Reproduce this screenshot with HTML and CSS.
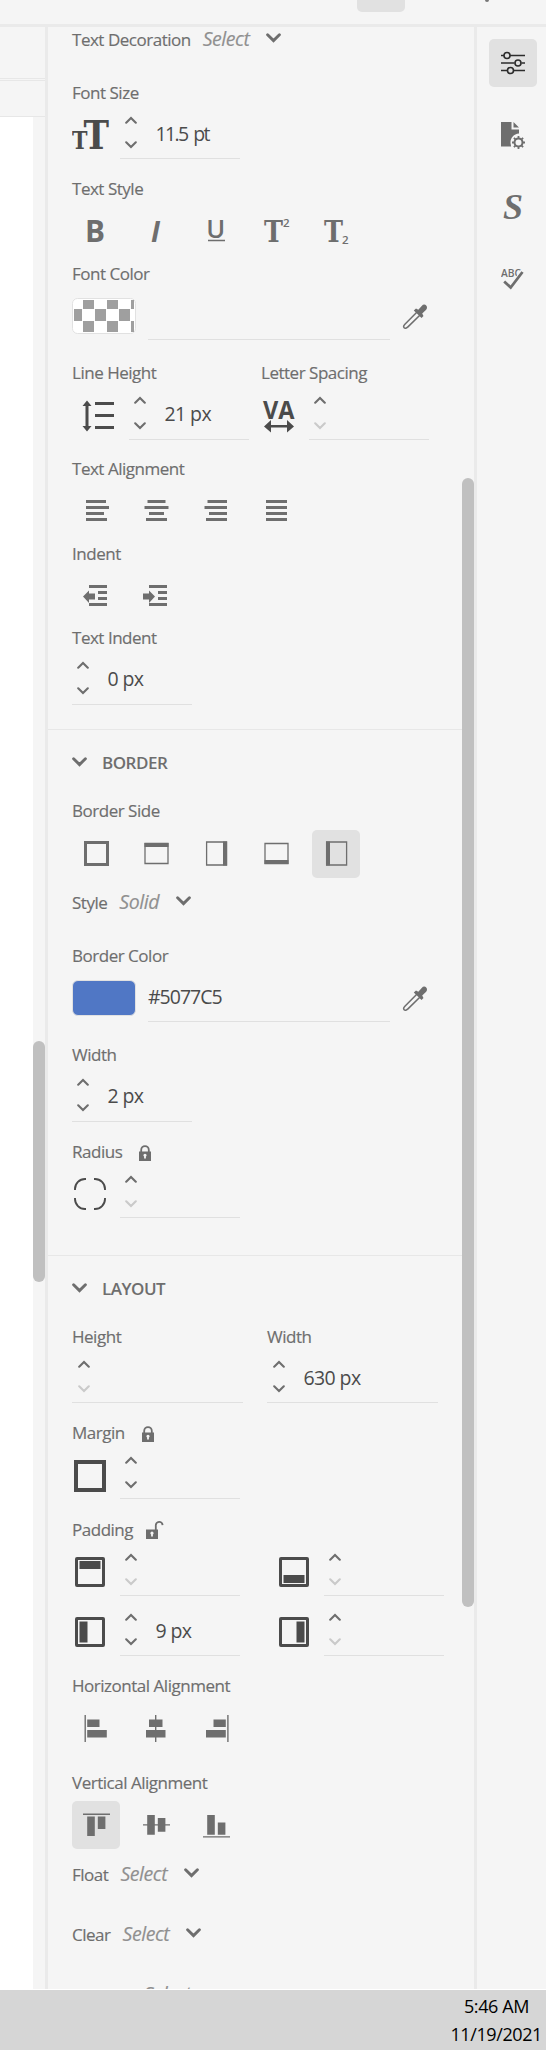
FILE: index.html
```html
<!DOCTYPE html>
<html lang="en">
<head>
<meta charset="utf-8">
<title>Style properties</title>
<link rel="stylesheet" href="styles.css">
</head>
<body>
<svg class="defs" width="0" height="0">
  <symbol id="up" viewBox="0 0 12 8"><path d="M1.2 6.7 6 1.9l4.8 4.8" fill="none" stroke="currentColor" stroke-width="2.1" stroke-linecap="round"/></symbol>
  <symbol id="down" viewBox="0 0 12 8"><path d="M1.2 1.3 6 6.1l4.8-4.8" fill="none" stroke="currentColor" stroke-width="2.1" stroke-linecap="round"/></symbol>
  <symbol id="chev" viewBox="0 0 15 10"><path d="M1.6 1.7 7.5 7.6l5.9-5.9" fill="none" stroke="currentColor" stroke-width="2.9" stroke-linecap="round"/></symbol>
  <symbol id="dropper" viewBox="0 0 26 26"><path d="M14.8 8.2 2.9 20.2c-1.3 1.3-1.6 2.6-.8 3.5s2.400.7 3.600-.6L17.800 11.200" fill="none" stroke="currentColor" stroke-width="1.500"/><path d="M11.800 6.500 14 4.400l2.300 1.400 3.400-3.900c1.300-1.500 3.300-1.700 4.500-.5s1.100 3.200-.3 4.500L20.200 9.500l1.300 2.600-2 2z" fill="currentColor"/></symbol>
  <symbol id="lock" viewBox="0 0 12 16"><path d="M2.200 8V5a3.800 3.900 0 0 1 7.600 0v3" fill="none" stroke="currentColor" stroke-width="1.800"/><path fill="currentColor" fill-rule="evenodd" d="M0 6.500h12V16H0zM4.400 10.300a1.600 1.600 0 0 1 3.200 0q0 .8-.7 1.200v2H5.100v-2q-.7-.4-.7-1.200"/></symbol>
</svg>
<header class="topbar"><div class="topbar-button"></div><div class="topbar-mark"></div></header>
<main class="workspace">
  <section class="canvas">
    <div class="ruler"></div>
    <div class="crumbs"></div>
    <div class="stage"><div class="page"></div><div class="track"><div class="thumb canvas-thumb"></div></div></div>
  </section>
  <section class="panel">
    <div class="content">
      <div class="row decoration"><span class="label">Text Decoration</span><span class="select">Select</span><svg class="chev"><use href="#chev"/></svg></div>

      <div class="group h96">
        <div class="label">Font Size</div>
        <div class="controls">
          <svg class="lead" width="48" height="55"><g class="slab"><text x="0" y="44.500" font-size="24" textLength="15.500" lengthAdjust="spacingAndGlyphs">T</text><text x="11.500" y="44.500" font-size="39" textLength="25.500" lengthAdjust="spacingAndGlyphs">T</text></g></svg>
          <div class="field w120"><div class="stepper"><svg><use href="#up"/></svg><svg><use href="#down"/></svg></div><span class="value narrow">11.5 pt</span></div>
        </div>
      </div>

      <div class="group h85">
        <div class="label">Text Style</div>
        <div class="buttons">
          <svg class="btn" viewBox="0 0 48 48"><text class="glyph bold" x="13" y="34.500" font-size="29.500" textLength="20" lengthAdjust="spacingAndGlyphs">B</text></svg>
          <svg class="btn" viewBox="0 0 48 48"><text class="glyph italic" x="19" y="34.500" font-size="29" textLength="9" lengthAdjust="spacingAndGlyphs">I</text></svg>
          <svg class="btn" viewBox="0 0 48 48"><text class="glyph medium" x="14.300" y="31" font-size="25" textLength="19" lengthAdjust="spacingAndGlyphs">U</text><path d="M16 33.500h17" stroke="currentColor" stroke-width="1.500"/></svg>
          <svg class="btn" viewBox="0 0 48 48"><text class="serif" x="12" y="34.500" font-size="29" textLength="19" lengthAdjust="spacingAndGlyphs">T</text><text class="glyph semi" x="31" y="19.500" font-size="11.500">2</text></svg>
          <svg class="btn" viewBox="0 0 48 48"><text class="serif" x="12" y="34.500" font-size="29" textLength="19" lengthAdjust="spacingAndGlyphs">T</text><text class="glyph semi" x="30" y="36.500" font-size="11.500">2</text></svg>
        </div>
      </div>

      <div class="group h99">
        <div class="label">Font Color</div>
        <div class="controls">
          <svg class="swatch" width="64" height="36" viewBox="0 0 64 36"><rect x=".5" y=".5" width="63" height="35" rx="5" fill="#fff" stroke="#e1e1e1"/><path fill="#9f9f9f" d="M11 2h11v9H11zM35 2h11v9H35zM59 2h3v9h-3zM2 11h8v12H2zM23 11h11v12H23zM47 11h11v12H47zM11 23h11v11H11zM35 23h11v11H35zM59 23h3v11h-3z"/></svg>
          <div class="field color"></div><svg class="dropper"><use href="#dropper"/></svg>
        </div>
      </div>

      <div class="group h96 pair">
        <div class="left"><div class="label">Line Height</div>
          <div class="controls">
            <svg class="lead wide" width="57" height="56"><path d="M15 20v25M23 19.500h19M23 31.500h19M23 43.500h19" fill="none" stroke="currentColor" stroke-width="3"/><path fill="currentColor" d="M15 16.500 19.500 22h-9zM15 47.500 19.500 42h-9z"/></svg>
            <div class="field w120 tall"><div class="stepper"><svg><use href="#up"/></svg><svg><use href="#down"/></svg></div><span class="value">21 px</span></div>
          </div>
        </div>
        <div class="right"><div class="label">Letter Spacing</div>
          <div class="controls">
            <svg class="lead" width="48" height="56"><text class="glyph va" x="2" y="34.500" font-size="25" textLength="31.500" lengthAdjust="spacingAndGlyphs">VA</text><path fill="currentColor" d="M3 42.500l7-6.500v5h16v-5l7 6.500-7 6v-5H10v5z"/></svg>
            <div class="field w120 tall"><div class="stepper"><svg><use href="#up"/></svg><svg class="off"><use href="#down"/></svg></div></div>
          </div>
        </div>
      </div>

      <div class="group h85">
        <div class="label">Text Alignment</div>
        <div class="buttons lines">
          <svg class="btn" viewBox="0 0 48 48"><path d="M14 14.500h20M14 20.500h23M14 26.500h18M14 32.500h21"/></svg>
          <svg class="btn" viewBox="0 0 48 48"><path d="M15.500 14.500h18M12.500 20.500h24M17 26.500h15M14 32.500h21"/></svg>
          <svg class="btn" viewBox="0 0 48 48"><path d="M15.500 14.500H35M12.500 20.500H35M17 26.500h18M14 32.500h21"/></svg>
          <svg class="btn" viewBox="0 0 48 48"><path d="M14 14.500h21M14 20.500h21M14 26.500h21M14 32.500h21"/></svg>
        </div>
      </div>

      <div class="group h84">
        <div class="label">Indent</div>
        <div class="buttons lines">
          <svg class="btn" viewBox="0 0 48 48"><path d="M17 14.500h18M26 20.500h9M26 26.500h9M17 32.500h18"/><path class="solid" d="M11 24.500l6-6V21.500h6v6h-6v3.500z"/></svg>
          <svg class="btn" viewBox="0 0 48 48"><path d="M17 14.500h18M26 20.500h9M26 26.500h9M17 32.500h18"/><path class="solid" d="M23 24.500l-6-6V21.500h-6v6h6v3.500z"/></svg>
        </div>
      </div>

      <div class="group h104">
        <div class="label">Text Indent</div>
        <div class="controls"><div class="field w120 tall"><div class="stepper"><svg><use href="#up"/></svg><svg><use href="#down"/></svg></div><span class="value">0 px</span></div></div>
      </div>

      <div class="section-head h69"><svg class="chev"><use href="#chev"/></svg><h2>BORDER</h2></div>

      <div class="group h92">
        <div class="label">Border Side</div>
        <div class="buttons sides">
          <svg class="btn" viewBox="0 0 48 48"><path d="M13.500 12.500h22v22h-22z" fill="none" stroke="currentColor" stroke-width="3"/></svg>
          <svg class="btn" viewBox="0 0 48 48"><path d="M13 13.500h23v20H13z" fill="none" stroke="currentColor" stroke-width="1.300"/><path d="M12.500 13h24v4h-24z" fill="currentColor"/></svg>
          <svg class="btn" viewBox="0 0 48 48"><path d="M14.600 12h20v23h-20z" fill="none" stroke="currentColor" stroke-width="1.300"/><path d="M31 11.500h4v24h-4z" fill="currentColor"/></svg>
          <svg class="btn" viewBox="0 0 48 48"><path d="M13 13.500h23v20H13z" fill="none" stroke="currentColor" stroke-width="1.300"/><path d="M12.500 30h24v4h-24z" fill="currentColor"/></svg>
          <svg class="btn selected" viewBox="0 0 48 48"><path d="M14.600 12h20v23h-20z" fill="none" stroke="currentColor" stroke-width="1.300"/><path d="M14 11.500h4v24h-4z" fill="currentColor"/></svg>
        </div>
      </div>

      <div class="row h53"><span class="label">Style</span><span class="select">Solid</span><svg class="chev"><use href="#chev"/></svg></div>

      <div class="group h99">
        <div class="label">Border Color</div>
        <div class="controls"><div class="swatch blue"></div><div class="field color"><span class="hex">#5077C5</span></div><svg class="dropper"><use href="#dropper"/></svg></div>
      </div>

      <div class="group h97">
        <div class="label">Width</div>
        <div class="controls"><div class="field w120 tall"><div class="stepper"><svg><use href="#up"/></svg><svg><use href="#down"/></svg></div><span class="value">2 px</span></div></div>
      </div>

      <div class="group h116">
        <div class="label with-lock">Radius<svg class="lock" width="12" height="16"><use href="#lock"/></svg></div>
        <div class="controls">
          <svg class="lead" width="48" height="55"><path d="M3 27v-1a10 10 0 0 1 10-10h1M22 16h1a10 10 0 0 1 10 10v1M3 35v1a10 10 0 0 0 10 10h1M22 46h1a10 10 0 0 0 10-10v-1" fill="none" stroke="currentColor" stroke-width="1.900"/></svg>
          <div class="field w120"><div class="stepper"><svg><use href="#up"/></svg><svg class="off"><use href="#down"/></svg></div></div>
        </div>
      </div>

      <div class="section-head h69"><svg class="chev"><use href="#chev"/></svg><h2>LAYOUT</h2></div>

      <div class="group h96 pair size">
        <div class="half"><div class="label">Height</div><div class="controls"><div class="field full"><div class="stepper"><svg><use href="#up"/></svg><svg class="off"><use href="#down"/></svg></div></div></div></div>
        <div class="half"><div class="label">Width</div><div class="controls"><div class="field full"><div class="stepper"><svg><use href="#up"/></svg><svg><use href="#down"/></svg></div><span class="value">630 px</span></div></div></div>
      </div>

      <div class="group h97">
        <div class="label with-lock">Margin<svg class="lock" width="12" height="16"><use href="#lock"/></svg></div>
        <div class="controls">
          <svg class="lead" width="48" height="55"><rect x="4" y="18" width="28" height="28" fill="none" stroke="currentColor" stroke-width="4"/></svg>
          <div class="field w120"><div class="stepper"><svg><use href="#up"/></svg><svg><use href="#down"/></svg></div></div>
        </div>
      </div>

      <div class="group h156">
        <div class="label with-lock">Padding<svg class="lock open" width="18" height="18" viewBox="0 0 18 18"><path d="M9.800 9V4.600a3.400 3.400 0 0 1 6.800-.5" fill="none" stroke="currentColor" stroke-width="1.800"/><path fill="currentColor" fill-rule="evenodd" d="M0 8.500h12V18H0zM4.400 12.200a1.600 1.600 0 0 1 3.200 0q0 .8-.7 1.200v2H5.100v-2q-.7-.4-.7-1.200"/></svg></div>
        <div class="padding-grid">
          <div class="controls"><svg class="lead" width="48" height="55"><rect x="4.500" y="17.500" width="27" height="27" rx=".5" fill="none" stroke="currentColor" stroke-width="3"/><path fill="currentColor" d="M7.500 20h21v8h-21z"/></svg><div class="field w120"><div class="stepper"><svg><use href="#up"/></svg><svg class="off"><use href="#down"/></svg></div></div></div>
          <div class="controls"><svg class="lead" width="48" height="55"><rect x="4.500" y="17.500" width="27" height="27" rx=".5" fill="none" stroke="currentColor" stroke-width="3"/><path fill="currentColor" d="M7.500 34h21v8h-21z"/></svg><div class="field w120"><div class="stepper"><svg><use href="#up"/></svg><svg class="off"><use href="#down"/></svg></div></div></div>
          <div class="controls"><svg class="lead" width="48" height="55"><rect x="4.500" y="17.500" width="27" height="27" rx=".5" fill="none" stroke="currentColor" stroke-width="3"/><path fill="currentColor" d="M7.500 20.500h8v21h-8z"/></svg><div class="field w120"><div class="stepper"><svg><use href="#up"/></svg><svg><use href="#down"/></svg></div><span class="value">9 px</span></div></div>
          <div class="controls"><svg class="lead" width="48" height="55"><rect x="4.500" y="17.500" width="27" height="27" rx=".5" fill="none" stroke="currentColor" stroke-width="3"/><path fill="currentColor" d="M20.500 20.500h8v21h-8z"/></svg><div class="field w120"><div class="stepper"><svg><use href="#up"/></svg><svg class="off"><use href="#down"/></svg></div></div></div>
        </div>
      </div>

      <div class="group h97">
        <div class="label">Horizontal Alignment</div>
        <div class="buttons align">
          <svg class="btn" viewBox="0 0 48 48"><path fill="currentColor" d="M12.500 11h1.400v27h-1.400zM15.200 15.500h12.300V23H15.200zM15.200 26h19.600v7.600H15.200z"/></svg>
          <svg class="btn" viewBox="0 0 48 48"><path fill="currentColor" d="M23 11h1.400v27H23zM17 15.500h13.500V23H17zM14 26h19.500v7.600H14z"/></svg>
          <svg class="btn" viewBox="0 0 48 48"><path fill="currentColor" d="M35.200 11h1.400v27h-1.400zM21.500 15.500h12.300V23H21.500zM14 26h19.800v7.600H14z"/></svg>
        </div>
      </div>

      <div class="group h92">
        <div class="label">Vertical Alignment</div>
        <div class="buttons valign">
          <svg class="btn selected" viewBox="0 0 48 48"><path fill="currentColor" d="M11 12.500h27v1.400H11zM15.200 15.500h7.600V35h-7.600zM25.800 15.500h7.600V28h-7.600z"/></svg>
          <svg class="btn" viewBox="0 0 48 48"><path fill="currentColor" d="M11 23.200h27v1.400H11zM15.200 14h7.600v19.800h-7.600zM25.800 17h7.600v13.700h-7.600z"/></svg>
          <svg class="btn" viewBox="0 0 48 48"><path fill="currentColor" d="M11 35.200h27v1.400H11zM15.200 14h7.600v19.800h-7.600zM25.800 21.500h7.600v12.300h-7.600z"/></svg>
        </div>
      </div>

      <div class="row h60"><span class="label">Float</span><span class="select">Select</span><svg class="chev"><use href="#chev"/></svg></div>
      <div class="row h60"><span class="label">Clear</span><span class="select">Select</span><svg class="chev"><use href="#chev"/></svg></div>
      <div class="row last"><span class="select">Select</span></div>
    </div>
    <div class="track panel-track"><div class="thumb panel-thumb"></div></div>
  </section>
  <nav class="rail">
    <div class="tool active"><svg width="26" height="24" viewBox="0 0 26 24" fill="none" stroke="currentColor" stroke-width="1.600"><path d="M1 4.500h3M10 4.500h15M1 12h13.500M21.500 12H25M1 19.500h6M13.500 19.500H25"/><circle cx="7" cy="4.500" r="3"/><circle cx="18" cy="12" r="3"/><circle cx="10.500" cy="19.500" r="3"/></svg></div>
    <div class="tool"><svg width="25" height="28" viewBox="0 0 25 28"><path fill="currentColor" d="M0 1h10.500v7.500h7.500v4C12.500 13 9.300 17 9.500 22l.6 3.500H0zM12.500 1l5.500 5.500h-5.500z"/><g stroke="currentColor" fill="none"><circle cx="17.500" cy="21.500" r="4" stroke-width="2"/><path stroke-width="1.800" d="M17.500 15v2.500M17.500 25.500V28M11 21.500h2.500M21.500 21.500H24M12.900 16.900l1.800 1.800M20.300 24.300l1.800 1.800M22.100 16.900l-1.800 1.800M14.700 24.300l-1.800 1.800"/></g></svg></div>
    <div class="tool style-letter">S</div>
    <div class="tool"><svg width="25" height="24" viewBox="0 0 25 24"><text class="glyph semi" x="0" y="9.800" font-size="11.500" textLength="20" lengthAdjust="spacingAndGlyphs">ABC</text><path d="M3.500 15.500l6 6L21.500 5" fill="none" stroke="#f5f5f5" stroke-width="5"/><path d="M3.200 14.500l6.500 6L21.500 5" fill="none" stroke="currentColor" stroke-width="2.800"/></svg></div>
  </nav>
</main>
<footer class="taskbar"><div>5:46 AM</div><div class="date">11/19/2021</div></footer>
</body>
</html>
```
FILE: styles.css
```css
* { box-sizing: border-box; }
body {
  margin: 0; width: 546px; height: 2050px; overflow: hidden;
  display: flex; flex-direction: column;
  background: #f5f5f5; color: #6e6e6e;
  font-family: "Open Sans", sans-serif;
}
svg { display: block; flex: none; }
.defs { position: absolute; }

.topbar { height: 27px; flex: none; border-bottom: 3px solid #eaeaea; display: flex; padding-left: 357px; }
.topbar-button { width: 48px; height: 12px; background: #e1e1e1; border-radius: 0 0 5px 5px; }
.topbar-mark { width: 4px; height: 2px; margin-left: 80px; background: #777; border-radius: 0 0 2px 2px; }

.workspace { display: flex; height: 1962px; flex: none; }
.canvas { width: 48px; flex: none; border-right: 3px solid #eaeaea; display: flex; flex-direction: column; }
.ruler { height: 52px; border-bottom: 1px solid #e7e7e7; }
.crumbs { height: 37px; margin-top: 1px; border-top: 1px solid #e7e7e7; border-bottom: 1px solid #e7e7e7; }
.stage { flex: 1; display: flex; margin-top: -1px; }
.page { width: 33px; background: #fff; margin-top: 1px; }
.track { width: 12px; flex: none; }
.thumb { width: 12px; background: #c0c0c0; border-radius: 6px; }
.canvas-thumb { height: 241px; margin-top: 925px; }

.panel { width: 429px; flex: none; display: flex; border-right: 3px solid #eaeaea; overflow: hidden; }
.content { width: 414px; flex: none; }
.panel-thumb { height: 1129px; margin-top: 451px; }

.label { height: 24px; line-height: 25px; font-size: 17px; letter-spacing: -0.48px; white-space: nowrap; -webkit-text-stroke: 0.15px currentColor; }
.group, .row { padding-left: 24px; }
.row { display: flex; height: 53px; align-items: flex-start; }
.select { height: 24px; line-height: 24px; font-size: 19.500px; font-style: italic; color: #909090; margin-left: 12px; letter-spacing: -0.45px; -webkit-text-stroke: 0.15px currentColor; }
.chev { width: 15px; height: 10px; }
.row .chev { margin: 6px 0 0 17px; }
.last .select { margin-left: 72px; }

.h53 { height: 53px; }
.h60 { height: 60px; }
.h69 { height: 69px; }
.h84 { height: 84px; }
.h85 { height: 85px; }
.h92 { height: 92px; }
.h96 { height: 96px; }
.h97 { height: 97px; }
.h99 { height: 99px; }
.h104 { height: 104px; }
.h116 { height: 116px; }
.h156 { height: 156px; }

.controls { display: flex; color: #4b4b4b; }
.field { height: 55px; border-bottom: 1px solid #e0e0e0; display: flex; }
.w120 { width: 120px; }
.full { width: 100%; }
.stepper { width: 12px; margin: 12px 0 0 5px; display: flex; flex-direction: column; gap: 17px; color: #6e6e6e; }
.stepper svg { width: 12px; height: 8px; }
.stepper .off { color: #cacaca; }
.value { font-size: 19.500px; line-height: 24px; margin: 18px 0 0 18.500px; letter-spacing: -0.6px; }
.narrow { letter-spacing: -1.6px; word-spacing: 2px; }
.tall { height: 56px; }
.tall .stepper { gap: 18px; }
.size .stepper { margin-left: 6px; }
.lead { color: #4b4b4b; }
.slab, .serif { font-family: "DejaVu Serif", serif; font-weight: bold; fill: currentColor; }
.glyph { fill: currentColor; }
.bold { font-weight: 700; }
.italic { font-style: italic; font-weight: 700; }
.medium, .semi { font-weight: 600; }
.va { font-weight: 700; }

.buttons { display: flex; gap: 12px; padding-top: 7px; }
.sides { padding-top: 8px; }
.btn { width: 48px; height: 48px; border-radius: 5px; }
.selected { background: #e1e1e1; }
.lines path { fill: none; stroke: currentColor; stroke-width: 3; }
.lines .solid { fill: currentColor; stroke: none; }

.swatch { margin: 13px 12px 0 0; }
.blue { width: 64px; height: 36px; background: #5077c5; border: 1px solid #e1e1e1; border-radius: 6px; }
.color { width: 242px; }
.hex { font-size: 19.500px; line-height: 24px; margin-top: 18px; letter-spacing: -1px; }
.dropper { width: 26px; height: 26px; margin: 19px 0 0 12px; color: #6e6e6e; }

.pair { display: flex; }
.left { width: 189px; flex: none; }
.size { gap: 24px; }
.half { width: 171px; flex: none; }
.with-lock { display: flex; }
.lock { margin: 6px 0 0 17px; }
.open { margin: 4px 0 0 13px; }
.padding-grid { display: grid; grid-template-columns: 204px 168px; row-gap: 5px; }

.section-head { border-top: 1px solid #e7e7e7; display: flex; padding: 20px 0 0 24px; }
.section-head .chev { margin: 7px 15px 0 0; }
h2 { margin: 0; font-size: 17px; line-height: 25px; font-weight: 600; letter-spacing: -0.5px; }

.rail { padding: 12px 9px 0 12px; display: flex; flex-direction: column; gap: 24px; }
.tool { width: 48px; height: 48px; border-radius: 5px; display: flex; align-items: center; justify-content: center; }
.active { background: #e1e1e1; color: #2c2c2c; }
.style-letter { font: italic bold 36px/48px "Liberation Serif", serif; }

.taskbar { height: 61px; border-top: 1px solid #fff; background: #d6d6d6; color: #000; font-size: 18px; line-height: 28px; padding: 2px 4px 0 0; text-align: right; letter-spacing: -0.4px; }
.taskbar div:first-child { padding-right: 13px; }
```
